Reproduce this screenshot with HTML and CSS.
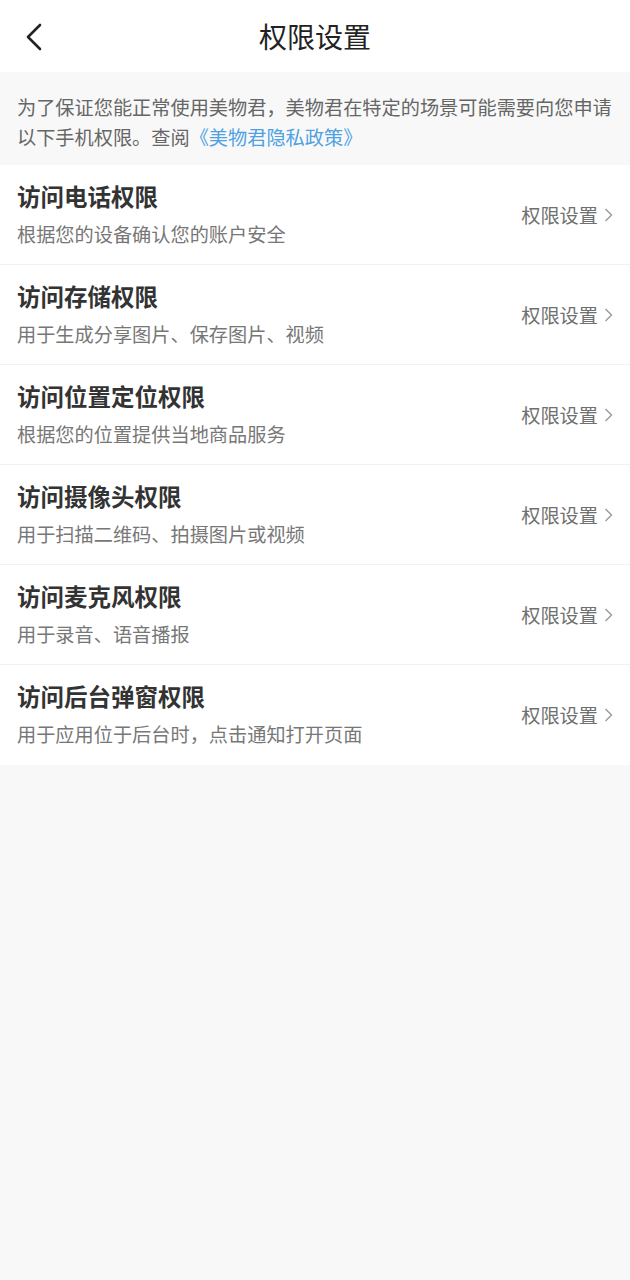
FILE: index.html
```html
<!DOCTYPE html>
<html lang="zh">
<head>
<meta charset="utf-8">
<link rel="stylesheet" href="styles.css">
</head>
<body>
<div class="page">
  <header class="nav">
    <svg class="back" width="20" height="28" viewBox="0 0 20 28"><path d="M16 2 L4 14 L16 26" fill="none" stroke="#222" stroke-width="2.6" stroke-linecap="round" stroke-linejoin="round"/></svg>
    <h1 class="title">权限设置</h1>
  </header>
  <p class="notice">为了保证您能正常使用美物君，美物君在特定的场景可能需要向您申请以下手机权限。查阅<span class="link">《美物君隐私政策》</span></p>
  <ul class="list">
    <li class="row"><div class="info"><div class="name">访问电话权限</div><div class="desc">根据您的设备确认您的账户安全</div></div><div class="action">权限设置<svg class="chev" width="9" height="16" viewBox="0 0 9 16"><path d="M1.5 2 L7.5 8 L1.5 14" fill="none" stroke="#9a9a9a" stroke-width="1.4"/></svg></div></li>
    <li class="row"><div class="info"><div class="name">访问存储权限</div><div class="desc">用于生成分享图片、保存图片、视频</div></div><div class="action">权限设置<svg class="chev" width="9" height="16" viewBox="0 0 9 16"><path d="M1.5 2 L7.5 8 L1.5 14" fill="none" stroke="#9a9a9a" stroke-width="1.4"/></svg></div></li>
    <li class="row"><div class="info"><div class="name">访问位置定位权限</div><div class="desc">根据您的位置提供当地商品服务</div></div><div class="action">权限设置<svg class="chev" width="9" height="16" viewBox="0 0 9 16"><path d="M1.5 2 L7.5 8 L1.5 14" fill="none" stroke="#9a9a9a" stroke-width="1.4"/></svg></div></li>
    <li class="row"><div class="info"><div class="name">访问摄像头权限</div><div class="desc">用于扫描二维码、拍摄图片或视频</div></div><div class="action">权限设置<svg class="chev" width="9" height="16" viewBox="0 0 9 16"><path d="M1.5 2 L7.5 8 L1.5 14" fill="none" stroke="#9a9a9a" stroke-width="1.4"/></svg></div></li>
    <li class="row"><div class="info"><div class="name">访问麦克风权限</div><div class="desc">用于录音、语音播报</div></div><div class="action">权限设置<svg class="chev" width="9" height="16" viewBox="0 0 9 16"><path d="M1.5 2 L7.5 8 L1.5 14" fill="none" stroke="#9a9a9a" stroke-width="1.4"/></svg></div></li>
    <li class="row"><div class="info"><div class="name">访问后台弹窗权限</div><div class="desc">用于应用位于后台时，点击通知打开页面</div></div><div class="action">权限设置<svg class="chev" width="9" height="16" viewBox="0 0 9 16"><path d="M1.5 2 L7.5 8 L1.5 14" fill="none" stroke="#9a9a9a" stroke-width="1.4"/></svg></div></li>
  </ul>
</div>
</body>
</html>
```
FILE: styles.css
```css
* { box-sizing: border-box; }
html, body { margin: 0; padding: 0; }
body {
  background: #f8f8f8;
  font-family: "Noto Sans CJK SC", "Noto Sans", sans-serif;
  width: 630px;
  min-height: 1280px;
}
.nav {
  height: 72px;
  background: #fff;
  display: flex;
  align-items: center;
  justify-content: center;
  position: relative;
}
.back {
  position: absolute;
  left: 24px;
  top: 23px;
}
.title {
  margin: 0;
  font-size: 28px;
  font-weight: 400;
  color: #222;
  line-height: 1;
}
.notice {
  margin: 0;
  height: 93px;
  padding: 20px 17px 0 17px;
  font-size: 19.2px;
  line-height: 30px;
  color: #666;
}
.link { color: #4ea1e3; }
.list {
  list-style: none;
  margin: 0;
  padding: 0;
  background: #fff;
}
.row {
  height: 100px;
  display: flex;
  align-items: center;
  justify-content: space-between;
  padding: 0 17px 0 17px;
  border-bottom: 1px solid #f2f2f2;
}
.row:last-child { border-bottom: none; }
.info { display: flex; flex-direction: column; }
.name {
  font-size: 23.5px;
  font-weight: 700;
  color: #333;
  line-height: 32px;
  margin-top: -2px;
}
.desc {
  font-size: 19.2px;
  color: #777;
  line-height: 28px;
  margin-top: 8px;
}
.action {
  display: flex;
  align-items: center;
  font-size: 19.2px;
  color: #707070;
  margin-right: 0;
}
.chev { margin-left: 6px; }
```
